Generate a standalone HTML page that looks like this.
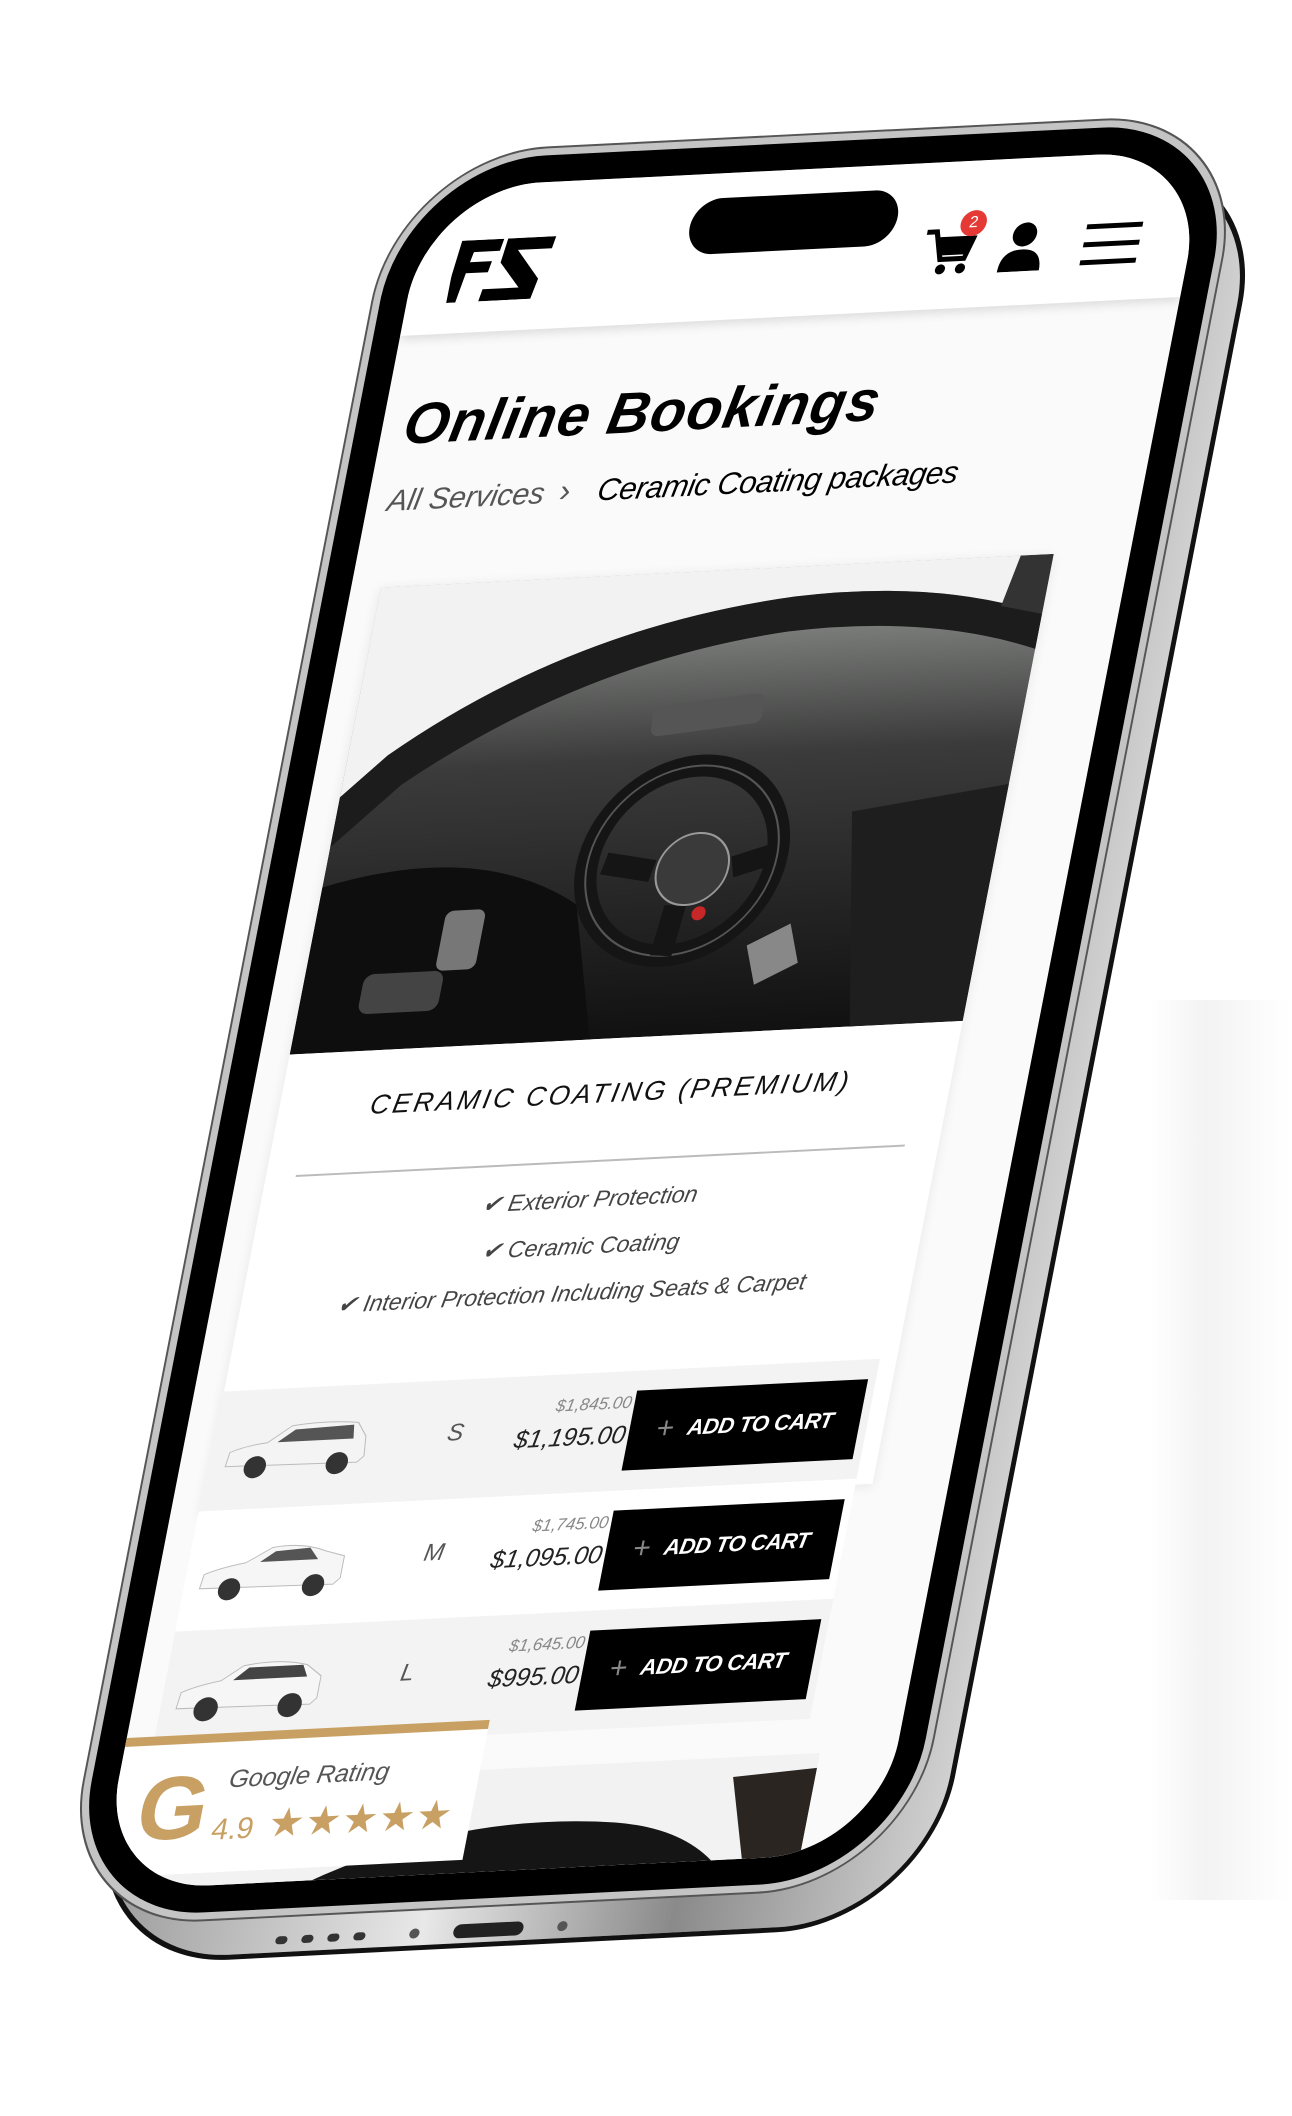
<!DOCTYPE html>
<html><head><meta charset="utf-8"><style>
html,body{margin:0;padding:0;background:#fff;}
body{width:1292px;height:2116px;overflow:hidden;position:relative;font-family:"Liberation Sans",sans-serif;}
.abs{position:absolute;}
#ph{position:absolute;left:0;top:0;width:780px;height:1703px;transform-origin:0 0;transform:matrix(1,-0.05,-0.195,1,429,188);}
.row{position:absolute;left:28px;width:658px;height:120px;}
.btn{position:absolute;left:419px;top:20px;width:231px;height:80px;background:#000;color:#fff;font-weight:bold;font-style:italic;font-size:22px;display:flex;align-items:center;justify-content:center;letter-spacing:-0.5px;}
.btn span{color:#888;font-weight:normal;font-size:30px;margin-right:14px;font-style:normal;}
.sz{position:absolute;left:236px;top:40px;font-size:24px;font-style:italic;color:#555;}
.old{position:absolute;right:242px;top:22px;font-size:17px;font-style:italic;color:#888;}
.new{position:absolute;right:242px;top:50px;font-size:25px;font-style:italic;color:#222;}
.car{position:absolute;left:12px;top:28px;}
.chk{position:absolute;left:0;width:780px;text-align:center;font-size:23px;font-style:italic;color:#444;font-weight:300;}
</style></head><body>
<div class="abs" style="left:1150px;top:1000px;width:140px;height:900px;background:linear-gradient(90deg,#fff,#f3f3f3 40%,#fff);"></div>
<div id="ph">
  <div class="abs" style="left:-4px;top:8px;width:848px;height:1771px;border-radius:150px;background:linear-gradient(90deg,#9a9a9a,#e8e8e8 40%,#8a8a8a 70%,#d0d0d0);border:5px solid #111;box-sizing:border-box;"></div>
  <div class="abs" style="left:190px;top:1756px;width:420px;height:12px;display:flex;gap:14px;align-items:center;">
    <i style="width:12px;height:8px;border-radius:4px;background:#333"></i><i style="width:12px;height:8px;border-radius:4px;background:#333"></i><i style="width:12px;height:8px;border-radius:4px;background:#333"></i><i style="width:12px;height:8px;border-radius:4px;background:#333"></i>
    <i style="width:10px;height:10px;border-radius:5px;background:#555;margin-left:30px"></i>
    <i style="width:70px;height:14px;border-radius:7px;background:#222;margin-left:20px"></i>
    <i style="width:10px;height:10px;border-radius:5px;background:#555;margin-left:20px"></i>
  </div>
  <div class="abs" style="left:-34px;top:-34px;width:848px;height:1771px;border-radius:146px;background:#000;border:7px solid #c4c4c4;box-sizing:border-box;box-shadow:0 0 0 2px #555;"></div>
  <div class="abs" style="left:0;top:0;width:780px;height:1703px;border-radius:112px;overflow:hidden;background:#fafafa;">
    <div class="abs" style="left:0;top:0;width:780px;height:148px;background:#fff;box-shadow:0 4px 10px rgba(0,0,0,.12);"></div>
    <div class="abs" style="left:271px;top:25px;width:208px;height:56px;border-radius:28px;background:#000;"></div>
    <svg class="abs" style="left:40px;top:55px" width="100" height="62" viewBox="0 0 100 62">
      <path d="M4,0 L46,0 L44,12 L18,12 L16,22 L38,22 L36,33 L14,33 L9,62 L-3,62 Z" fill="#000"/>
      <path d="M50,0 L98,0 L96,12 L62,12 L88,42 L84,62 L32,62 L34,50 L70,50 L47,24 Z" fill="#000"/>
    </svg>
    <svg class="abs" style="left:510px;top:62px" width="56" height="56" viewBox="0 0 56 56">
      <path d="M2,8 L12,8 L20,36 L44,36 L50,16 L15,16" fill="none" stroke="#000" stroke-width="5"/>
      <path d="M15,16 L50,16 L45,32 L19,32 Z" fill="#000"/>
      <circle cx="22" cy="46" r="5" fill="#000"/><circle cx="42" cy="46" r="5" fill="#000"/>
    </svg>
    <div class="abs" style="left:544px;top:50px;width:26px;height:26px;border-radius:13px;background:#e53935;color:#fff;font-size:16px;text-align:center;line-height:26px;">2</div>
    <svg class="abs" style="left:588px;top:64px" width="46" height="50" viewBox="0 0 46 50">
      <circle cx="23" cy="13" r="12" fill="#000"/><path d="M2,50 Q2,28 23,28 Q44,28 44,50 Z" fill="#000"/>
    </svg>
    <div class="abs" style="left:672px;top:70px;width:56px;height:5px;background:#000"></div>
    <div class="abs" style="left:672px;top:88px;width:56px;height:5px;background:#000"></div>
    <div class="abs" style="left:672px;top:106px;width:56px;height:5px;background:#000"></div>
    <div class="abs" style="left:22px;top:204px;font-size:58px;font-weight:bold;font-style:italic;letter-spacing:1px;color:#000;">Online Bookings</div>
    <div class="abs" style="left:20px;top:298px;font-size:30px;font-style:italic;color:#555;font-weight:300;">All Services</div>
    <div class="abs" style="left:192px;top:294px;font-size:32px;color:#555;">&#8250;</div>
    <div class="abs" style="left:230px;top:296px;font-size:31px;font-style:italic;color:#000;letter-spacing:-0.5px;">Ceramic Coating packages</div>
    <div class="abs" style="left:30px;top:401px;width:673px;height:930px;background:#fff;box-shadow:0 2px 12px rgba(0,0,0,.08);"></div>
    <svg class="abs" style="left:30px;top:401px" width="673" height="467" viewBox="0 0 673 467">
      <defs>
        <linearGradient id="dash" x1="0" y1="0" x2="0" y2="1"><stop offset="0" stop-color="#9a9c9a"/><stop offset=".4" stop-color="#3a3b3a"/><stop offset="1" stop-color="#111"/></linearGradient>
      </defs>
      <rect width="673" height="467" fill="url(#dash)"/>
      <path d="M0,0 L673,0 L673,60 Q560,20 420,30 Q200,50 40,170 L0,210 Z" fill="#f2f2f2"/>
      <path d="M0,210 L40,170 Q200,50 420,30 Q560,20 673,60 L673,95 Q560,55 420,65 Q220,85 60,200 L0,260 Z" fill="#1c1c1c"/>
      <path d="M640,0 L673,0 L673,60 L630,50 Z" fill="#333"/>
      <rect x="300" y="130" width="110" height="30" rx="8" fill="#555" transform="rotate(-5 355 145)"/>
      <path d="M0,300 Q150,260 260,330 L300,467 L0,467 Z" fill="#0e0e0e"/>
      <path d="M520,250 L673,230 L673,467 L560,467 Z" fill="#1e1e1e"/>
      <circle cx="358" cy="291" r="95" fill="none" stroke="#151515" stroke-width="22"/>
      <circle cx="358" cy="291" r="95" fill="none" stroke="#555" stroke-width="2"/>
      <path d="M280,290 L330,300 M410,300 L445,290 M360,336 L355,386" stroke="#151515" stroke-width="22"/>
      <circle cx="370" cy="300" r="36" fill="#3a3a3a" stroke="#999" stroke-width="2"/>
      <circle cx="385" cy="345" r="7" fill="#c62828"/>
      <rect x="130" y="330" width="40" height="60" rx="8" fill="#777"/>
      <rect x="60" y="390" width="80" height="40" rx="10" fill="#444"/>
      <path d="M440,380 L480,360 L495,400 L455,420 Z" fill="#888"/>
    </svg>
    <div class="abs" style="left:0;top:908px;width:724px;text-align:center;font-size:27px;font-style:italic;letter-spacing:3px;color:#111;font-weight:500;">CERAMIC COATING (PREMIUM)</div>
    <div class="abs" style="left:60px;top:990px;width:609px;height:2px;background:#bbb;"></div>
    <div class="chk" style="top:1016px;width:724px;">&#10004; Exterior Protection</div>
    <div class="chk" style="top:1063px;width:724px;">&#10004; Ceramic Coating</div>
    <div class="chk" style="top:1110px;width:724px;">&#10004; Interior Protection Including Seats &amp; Carpet</div>
    <div class="row" style="top:1205px;background:#f3f3f3;">
      <svg class="car" width="150" height="66" viewBox="0 0 150 66"><path d="M6,48 L8,34 Q22,28 44,26 L66,10 Q100,6 132,10 L142,24 L144,44 L138,50 Z" fill="#f4f4f4" stroke="#bbb"/><path d="M54,26 L70,14 L128,12 L130,26 Z" fill="#555"/><circle cx="36" cy="50" r="11" fill="#333"/><circle cx="118" cy="50" r="11" fill="#333"/></svg>
      <div class="sz">S</div><div class="old">$1,845.00</div><div class="new">$1,195.00</div>
      <div class="btn"><span>+</span>ADD TO CART</div>
    </div>
    <div class="row" style="top:1325px;background:#fff;">
      <svg class="car" width="150" height="66" viewBox="0 0 150 66"><path d="M4,50 L6,36 Q20,30 46,26 L70,12 Q100,8 124,18 L144,24 L144,46 L138,52 Z" fill="#f6f6f6" stroke="#bbb"/><path d="M60,26 L74,16 L108,14 L118,26 Z" fill="#555"/><circle cx="34" cy="52" r="11" fill="#333"/><circle cx="118" cy="52" r="11" fill="#333"/></svg>
      <div class="sz">M</div><div class="old">$1,745.00</div><div class="new">$1,095.00</div>
      <div class="btn"><span>+</span>ADD TO CART</div>
    </div>
    <div class="row" style="top:1445px;background:#f3f3f3;">
      <svg class="car" width="150" height="66" viewBox="0 0 150 66"><path d="M4,50 L6,34 Q20,28 44,24 L64,10 Q100,4 128,12 L144,24 L144,46 L138,52 Z" fill="#f6f6f6" stroke="#bbb"/><path d="M56,24 L70,12 L124,12 L130,24 Z" fill="#444"/><circle cx="34" cy="52" r="12" fill="#333"/><circle cx="118" cy="52" r="12" fill="#333"/></svg>
      <div class="sz">L</div><div class="old">$1,645.00</div><div class="new">$995.00</div>
      <div class="btn"><span>+</span>ADD TO CART</div>
    </div>
    <svg class="abs" style="left:30px;top:1600px" width="673" height="120" viewBox="0 0 673 120">
      <rect width="673" height="120" fill="#f2f2f2"/>
      <path d="M150,120 Q300,40 480,60 Q560,70 600,120 Z" fill="#151515"/>
      <path d="M590,20 L673,15 L673,120 L620,120 Z" fill="#2a2520"/>
    </svg>
    <div class="abs" style="left:0;top:1550px;width:363px;height:140px;background:#fff;border-top:9px solid #c8a063;box-sizing:border-box;">
      <div class="abs" style="left:26px;top:20px;font-size:90px;font-weight:bold;color:#c8a063;line-height:1;">G</div>
      <div class="abs" style="left:112px;top:24px;font-size:25px;font-style:italic;color:#555;">Google Rating</div>
      <div class="abs" style="left:104px;top:72px;font-size:30px;color:#c8a063;font-weight:300;">4.9</div>
      <div class="abs" style="left:160px;top:62px;font-size:40px;color:#c8a063;letter-spacing:1px;">&#9733;&#9733;&#9733;&#9733;&#9733;</div>
    </div>
  </div>
</div>
</body></html>
